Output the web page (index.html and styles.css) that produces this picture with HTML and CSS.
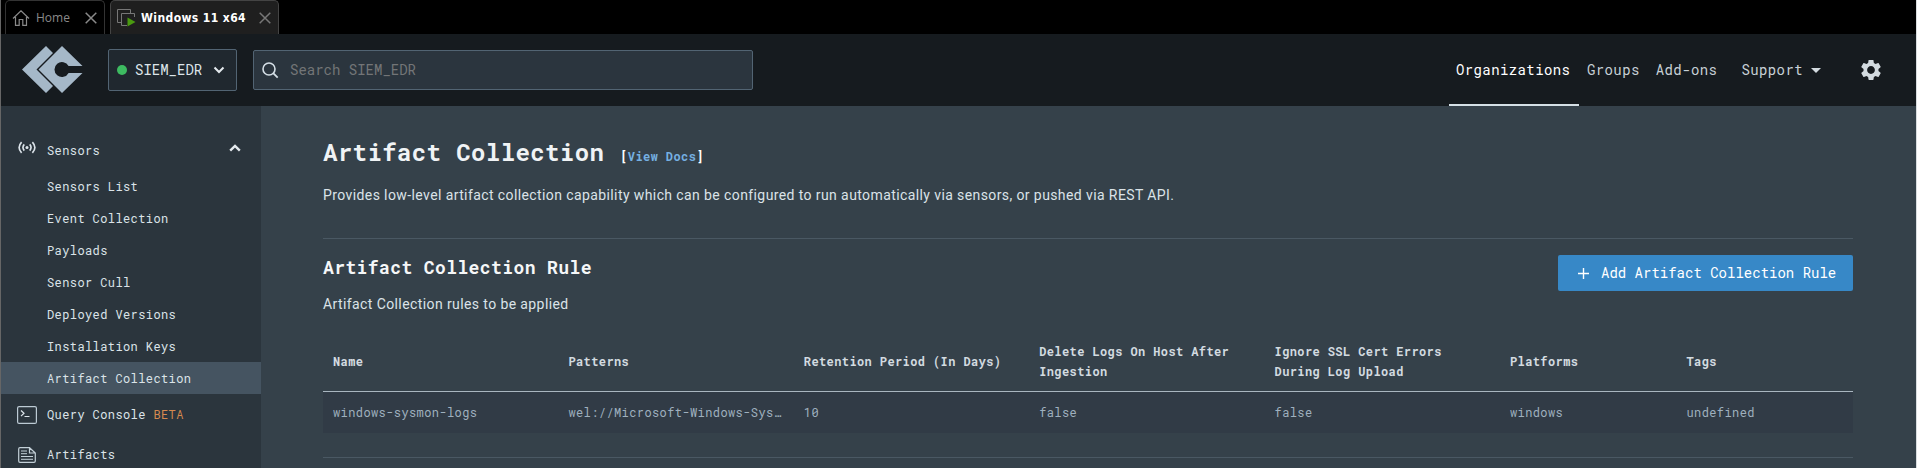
FILE: index.html
```html
<!DOCTYPE html>
<html lang="en">
<head>
<meta charset="utf-8">
<title>Artifact Collection</title>
<link rel="stylesheet" href="styles.css">
</head>
<body>
<div class="window">
  <div class="tabs">
    <div class="tab tab-home">
      <svg class="home" width="18" height="16" viewBox="0 0 18 16"><path d="M1 8.5 9 .8l8 7.7M3.5 7v8.3h3.7V9.5h3.6v5.8h3.7V7" fill="none" stroke="#8a8a8a" stroke-width="1.2"/></svg>
      <span>Home</span>
      <svg class="close" width="12" height="12" viewBox="0 0 12 12"><path d="m.7.7 10.6 10.6M11.3.7.7 11.3" stroke="#8a8a8a" stroke-width="1.5"/></svg>
    </div>
    <div class="tab tab-active">
      <svg class="vm" width="19" height="18" viewBox="0 0 19 18"><path d="M4.5 13.5h-4V.5h13v4" fill="none" stroke="#777"/><path d="M10 16.500H4.500V4.500h13V8" fill="none" stroke="#777"/><path d="M10.500 8.500v9l8-4.500z" fill="#4a9a10"/></svg>
      <span>Windows 11 x64</span>
      <svg class="close" width="12" height="12" viewBox="0 0 12 12"><path d="m.7.7 10.6 10.6M11.3.7.7 11.3" stroke="#777" stroke-width="1.5"/></svg>
    </div>
  </div>
  <header class="header">
    <svg class="logo" width="61" height="48" viewBox="0 0 61 48"><path fill="#a5b8c8" d="M24 0 0 23.500 24 47l7-7-16.500-16.500L31 7z"/><path fill="#a5b8c8" d="M40 0 16.500 23.500 40 47l20.500-20H46.600a7.500 7.500 0 1 1 0-7h13.900z"/></svg>
    <button class="org"><span class="dot"></span><span>SIEM_EDR</span><svg width="12" height="8" viewBox="0 0 12 8"><path d="m1.500 1.500 4.500 4.500 4.500-4.500" fill="none" stroke="#e4eaee" stroke-width="2"/></svg></button>
    <div class="search"><svg width="17" height="17" viewBox="0 0 17 17"><circle cx="7" cy="7" r="6" fill="none" stroke="#d5dfe6" stroke-width="1.600"/><path d="m11.200 11.200 4.500 4.500" stroke="#d5dfe6" stroke-width="1.800"/></svg><span>Search SIEM_EDR</span></div>
    <nav class="nav">
      <a class="link current">Organizations</a><a class="link">Groups</a><a class="link">Add-ons</a><a class="link support">Support<i class="caret"></i></a>
      <svg class="gear" width="24" height="24" viewBox="0 0 24 24"><path fill="#d3dbe0" d="M19.430 12.980c.04-.32.07-.64.07-.98s-.03-.66-.07-.98l2.110-1.650c.19-.15.24-.42.12-.64l-2-3.460c-.12-.22-.39-.3-.61-.22l-2.490 1c-.52-.4-1.080-.73-1.690-.98l-.38-2.650C14.460 2.180 14.250 2 14 2h-4c-.25 0-.46.18-.49.42l-.38 2.650c-.61.25-1.170.59-1.690.98l-2.490-1c-.23-.09-.49 0-.61.22l-2 3.460c-.13.22-.07.49.12.64l2.110 1.650c-.04.32-.07.65-.07.98s.03.66.07.98l-2.110 1.650c-.19.15-.24.42-.12.64l2 3.460c.12.22.39.3.61.22l2.490-1c.52.4 1.080.73 1.690.98l.38 2.650c.03.24.24.42.49.42h4c.25 0 .46-.18.49-.42l.38-2.650c.61-.25 1.170-.59 1.690-.98l2.490 1c.23.09.49 0 .61-.22l2-3.460c.12-.22.07-.49-.12-.64l-2.110-1.650zM12 15.900c-2.150 0-3.900-1.750-3.900-3.900s1.750-3.900 3.900-3.900 3.900 1.750 3.900 3.900-1.750 3.900-3.900 3.900z"/></svg>
    </nav>
  </header>
  <div class="body">
    <aside class="sidebar">
      <div class="group first">
        <svg class="ico sensors" width="18" height="13" viewBox="0 0 20 14"><g fill="none" stroke="#dce4ea" stroke-width="1.800"><path d="M4 1Q-1.500 7 4 13M7 3.500Q4 7 7 10.500M16 1q5.500 6 0 12M13 3.500q3 3.500 0 7"/></g><circle cx="10" cy="7" r="1.700" fill="#dce4ea"/></svg>
        <span>Sensors</span>
        <svg class="up" width="12" height="8" viewBox="0 0 12 8"><path d="m1.200 6.700 4.800-4.800 4.800 4.800" fill="none" stroke="#e4eaee" stroke-width="2.400"/></svg>
      </div>
      <a class="item">Sensors List</a>
      <a class="item">Event Collection</a>
      <a class="item">Payloads</a>
      <a class="item">Sensor Cull</a>
      <a class="item">Deployed Versions</a>
      <a class="item">Installation Keys</a>
      <a class="item selected">Artifact Collection</a>
      <div class="group">
        <svg class="ico" width="20" height="18" viewBox="0 0 20 18"><rect x=".6" y=".6" width="18.800" height="16.800" rx="1.500" fill="none" stroke="#bccad4" stroke-width="1.200"/><path d="m4 4.500 3 2.800-3 2.800M7.500 10.500h5" fill="none" stroke="#dce4ea" stroke-width="1.200"/></svg>
        <span>Query Console <b class="beta">BETA</b></span>
      </div>
      <div class="group">
        <svg class="ico doc" width="18" height="16" viewBox="0 0 18 16"><path d="M11.500.7H2Q.7.7.7 2v12q0 1.300 1.300 1.300h14q1.300 0 1.300-1.300V6zV6h5.800" fill="none" stroke="#c3d0d8" stroke-width="1.200"/><path d="M3 4h6M3 6.700h6M3 9.500h12M3 12.300h12" stroke="#c3d0d8"/></svg>
        <span>Artifacts</span>
      </div>
    </aside>
    <main class="content">
      <div class="heading"><h1>Artifact Collection</h1><span class="docs">[<a>View Docs</a>]</span></div>
      <p class="lead">Provides low-level artifact collection capability which can be configured to run automatically via sensors, or pushed via REST API.</p>
      <section class="rules">
        <div class="rules-top">
          <div><h2>Artifact Collection Rule</h2><p class="sub">Artifact Collection rules to be applied</p></div>
          <button class="add"><svg width="11" height="11" viewBox="0 0 11 11"><path d="M5.500 0v11M0 5.500h11" stroke="#fff" stroke-width="1.400"/></svg><span>Add Artifact Collection Rule</span></button>
        </div>
        <div class="row head"><span>Name</span><span>Patterns</span><span>Retention Period (In Days)</span><span>Delete Logs On Host After Ingestion</span><span>Ignore SSL Cert Errors During Log Upload</span><span>Platforms</span><span>Tags</span></div>
        <div class="row data"><span>windows-sysmon-logs</span><span>wel://Microsoft-Windows-Sys…</span><span>10</span><span>false</span><span>false</span><span>windows</span><span>undefined</span></div>
      </section>
    </main>
  </div>
</div>
</body>
</html>
```
FILE: styles.css
```css
* { box-sizing: border-box; }
body { margin: 0; overflow: hidden; background: #35414a; }
h1, h2, p { margin: 0; }
svg { display: block; flex: none; }
.window {
  height: 468px; display: flex; flex-direction: column;
  border-left: 1px solid #666; border-right: 1px solid #d8dcdf;
  font: 12px/20px "Roboto Mono", "DejaVu Sans Mono", monospace;
  letter-spacing: .4px; color: #dbe3e8;
}
.tabs { flex: none; height: 34px; background: #000; display: flex; gap: 5px; padding-left: 4px; }
.tab {
  display: flex; align-items: center; height: 34px; border: 1px solid #333; border-bottom: 0;
  border-radius: 5px 5px 0 0; font: 12px/16px "Open Sans", "Noto Sans", sans-serif; letter-spacing: 0; color: #8a8a8a;
}
.tab span { white-space: nowrap; }
.tab-home { width: 100px; padding-left: 6px; }
.tab-home span { width: 49px; margin-left: 6px; }
.tab-active { width: 169px; padding-left: 6px; background: #1f1f1f; border-color: #444; color: #fff; }
.tab-active span { width: 118px; margin-left: 5px; font-family: "DejaVu Sans Condensed", "DejaVu Sans", sans-serif; font-weight: 700; letter-spacing: .4px; }
.header { flex: none; height: 72px; background: #161b1f; display: flex; align-items: center; }
.logo { margin: 0 25px 0 21px; }
button { font: 14px/20px "Roboto Mono", "DejaVu Sans Mono", monospace; letter-spacing: 0; }
.org {
  width: 129px; height: 42px; padding: 0 0 0 8px; display: flex; align-items: center;
  background: #20282f; border: 1px solid #526473; border-radius: 2px; color: #dce4e9;
}
.dot { width: 10px; height: 10px; border-radius: 50%; background: #3dbb61; margin-right: 8px; }
.org svg { margin-left: 11px; }
.search {
  width: 500px; height: 40px; margin-left: 16px; padding-left: 8px; display: flex; align-items: center; gap: 11px;
  background: #2b353e; border: 1px solid #526473; border-radius: 2px;
  font-size: 14px; letter-spacing: 0; color: #737577;
}
.nav { margin-left: auto; height: 72px; display: flex; padding-right: 33px; font-size: 14px; letter-spacing: .4px; }
.link { display: flex; align-items: center; padding: 0 8px; color: #c7d0d6; }
.current { width: 130px; padding: 2px 0 0 7px; border-bottom: 2px solid #d5e0e6; color: #fff; }
.support { padding-left: 16px; }
.caret { margin-left: 8px; border: 5px solid transparent; border-top-color: #d3dbe0; border-bottom: 0; }
.gear { align-self: center; margin-left: 30px; }
.body { flex: 1; min-height: 0; display: flex; }
.sidebar { width: 260px; flex: none; background: #2b353d; padding-top: 24px; overflow: hidden; }
.group { height: 40px; display: flex; align-items: center; padding: 1px 20px 0 16px; }
.group span { flex: 1; margin-left: 10px; padding-bottom: 2px; }
.sensors { margin: -6px 1px 0 1px; }
.up { margin-top: -6px; }
.doc { margin: 0 1px; }
.beta { color: #d6894f; font-weight: 400; }
.item { display: block; height: 32px; line-height: 32px; padding-left: 46px; }
.selected { background: #455461; }
.content { flex: 1; min-width: 0; background: #35414a; padding: 30px 63px 0 62px; }
.heading { display: flex; align-items: baseline; gap: 16px; height: 44px; }
h1 { font-size: 24px; line-height: 32px; letter-spacing: .4px; color: #f0f3f5; }
.docs { font-weight: 700; color: #fff; }
.docs a { color: #75b0e2; }
.lead, .sub { font: 14px/20px Roboto, sans-serif; letter-spacing: .4px; }
.lead { margin-top: 5px; }
.rules { height: 220px; margin-top: 33px; border: solid #4a5863; border-width: 1px 0; }
.rules-top { height: 93px; display: flex; justify-content: space-between; align-items: flex-start; padding-top: 16px; }
h2 { font-size: 18px; line-height: 28px; margin-top: -2px; letter-spacing: .4px; color: #f5f7f8; }
.sub { margin-top: 13px; }
.add {
  display: flex; align-items: center; gap: 12px; width: 295px; height: 36px; padding: 0 0 0 20px;
  background: #3788c7; color: #fff; border: 0; border-radius: 2px;
}
.row { display: grid; grid-template-columns: repeat(5, 235.4px) 176.500px 1fr; align-items: center; }
.row span { padding: 0 10px; }
.head { height: 60px; padding-bottom: 1px; border-bottom: 1px solid #a9b6c0; font-weight: 700; color: #d3dbe0; }
.data { height: 41px; padding-bottom: 1px; background: #313b46; color: #9fb0be; }
.data span { overflow: hidden; white-space: nowrap; }
```
